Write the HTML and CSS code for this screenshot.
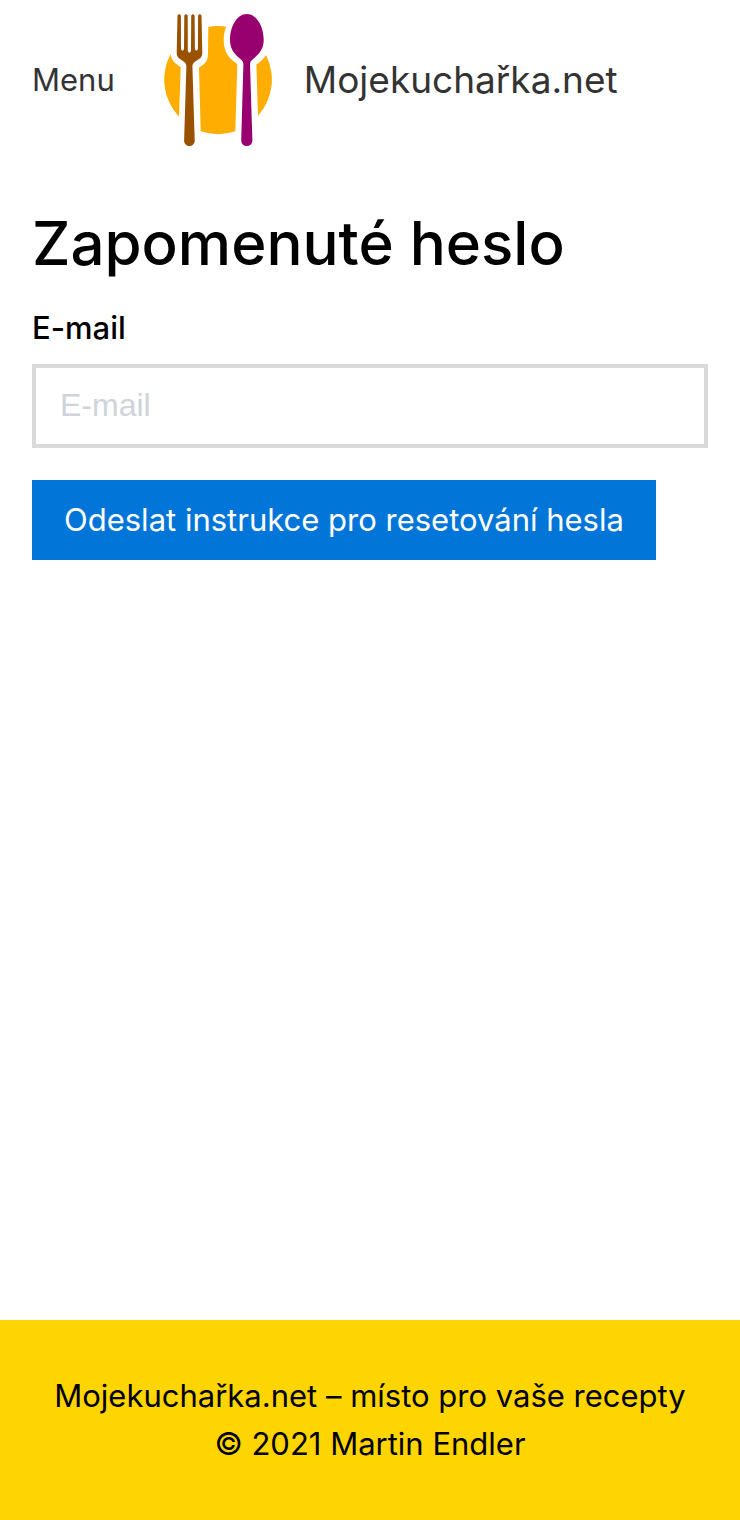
FILE: index.html
```html
<!DOCTYPE html>
<html lang="cs">
<head>
<meta charset="utf-8">
<meta name="viewport" content="width=device-width, initial-scale=1">
<title>Zapomenuté heslo – Mojekuchařka.net</title>
<link rel="stylesheet" href="styles.css">
</head>
<body>
<header class="header">
  <button class="menu-button" type="button">Menu</button>
  <a class="brand" href="#">
    <svg class="logo" viewBox="164 14 108 132" aria-hidden="true">
      <path fill="#ffad00" d="M170.7 54C171 60 175 63.500 180.700 67L179 116.700A54 54 0 0 1 170.700 54ZM208.300 27A54 54 0 0 1 226 26.700C224.500 31 223.700 35 223.700 40C223.700 52 229 58.500 237.300 64L235.300 131.200A54 54 0 0 1 200.700 131.200L199 67.500C205 64 208 61 208 54ZM266 55A54 54 0 0 1 258 115.700L256.400 64.500C260 62 263 60 266 55Z"/>
      <path fill="#9a5200" d="M177.500 15.500Q179.200 12.800 180.900 15.500L181 49Q182.500 52.500 184 49L184.300 15.500Q186 12.800 187.700 15.500L187.800 51Q189.400 54.500 191 51L191.200 15.500Q192.900 12.800 194.600 15.500L194.900 49Q196.400 52.500 197.900 49L198.100 15.500Q199.800 12.800 201.500 15.500L202.300 53Q202.300 57 199 59L194.500 62Q192.400 63.500 192.400 66L194.700 141A5.300 5.100 0 0 1 184.100 141L186.400 66Q186.400 63.500 184.300 62L180 59Q176.700 57 176.700 53Z"/>
      <path fill="#99006f" d="M246.800 14C257 14 263.700 27 263.700 40C263.700 50 258 55 252 60Q250 61.500 250 64L252.400 140.500A5.600 5.500 0 0 1 241.200 140.500L243.400 64Q243.400 61.500 241.500 60C235.500 55 230 50 230 40C230 27 236.600 14 246.800 14Z"/>
    </svg>
    <span class="brand-name">Mojekuchařka.net</span>
  </a>
</header>
<main class="content">
  <h1 class="title">Zapomenuté heslo</h1>
  <form class="form">
    <label class="label" for="email">E-mail</label>
    <input class="input" id="email" type="email" placeholder="E-mail">
    <button class="submit" type="submit">Odeslat instrukce pro resetování hesla</button>
  </form>
</main>
<footer class="footer">
  <p class="footer-line">Mojekuchařka.net – místo pro vaše recepty</p>
  <p class="footer-line">© 2021 Martin Endler</p>
</footer>
</body>
</html>
```
FILE: styles.css
```css
* {
  box-sizing: border-box;
}

body {
  display: flex;
  flex-direction: column;
  min-height: 100vh;
  margin: 0;
  background: #fff;
  color: #000;
  font-family: Inter, "Liberation Sans", sans-serif;
  font-size: 31px;
  line-height: 48px;
}

.header {
  display: flex;
  align-items: center;
  gap: 49px;
  height: 160px;
  padding: 0 32px;
}

.menu-button {
  padding: 0;
  border: 0;
  background: none;
  color: #333;
  font: inherit;
}

.brand {
  display: flex;
  align-items: center;
  gap: 32px;
  color: #333;
  text-decoration: none;
}

.logo {
  flex: none;
  width: 108px;
  height: 132px;
}

.brand-name {
  font-size: 37px;
}

.content {
  flex: 1;
  padding: 48px 32px;
}

.title {
  margin: 0 0 26px;
  font-size: 60px;
  font-weight: 500;
  line-height: 70px;
}

.form {
  display: flex;
  flex-direction: column;
  align-items: flex-start;
}

.label {
  margin-bottom: 12px;
  font-weight: 500;
}

.input {
  width: 100%;
  height: 84px;
  margin-bottom: 32px;
  padding: 0 24px 2px;
  border: 4px solid #d9d9d9;
  border-radius: 0;
  background: #fff;
  color: #000;
  font-family: "Liberation Sans", Arial, sans-serif;
  font-size: 32px;
}

.input::placeholder {
  color: #ced4da;
  opacity: 1;
}

.submit {
  padding: 16px 32px;
  border: 0;
  background: #0275d8;
  color: #fff;
  font: inherit;
}

.footer {
  padding: 52px 32px;
  background: #ffd500;
  text-align: center;
}

.footer-line {
  margin: 0;
}
```
